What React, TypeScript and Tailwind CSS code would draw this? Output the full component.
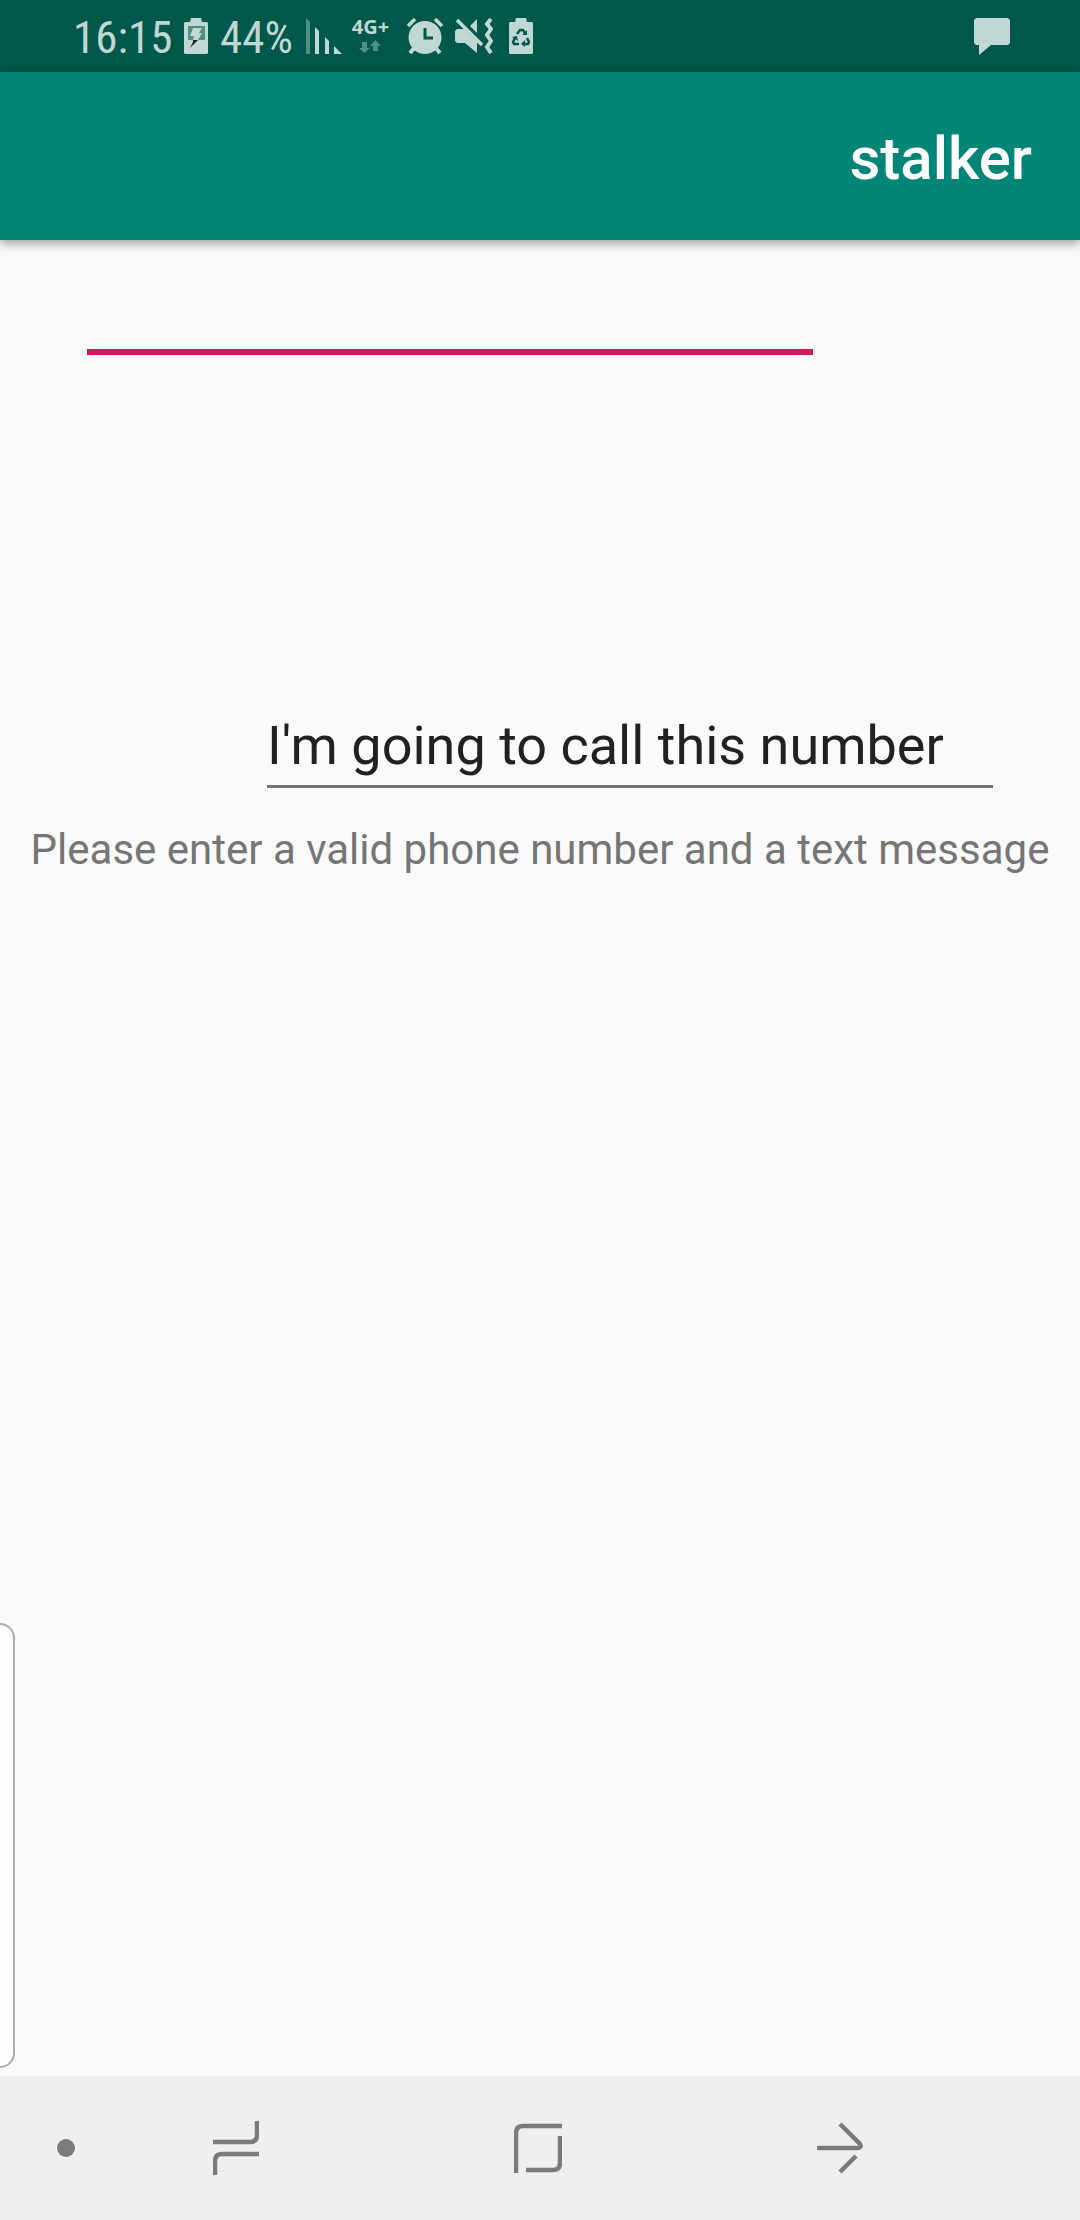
import { useState } from "react";

const tint = "#c1d7d3";
const teal = "#00584a";

function ChargingBatteryIcon() {
  return (
    <svg width="24" height="36" viewBox="0 0 24 36" aria-hidden="true">
      <path d="M7 0h10l1 4h5l1 1v30l-1 1H1l-1-1V5l1-1h5z" fill={tint} />
      <path d="M4 8h17v14H4z" fill="#4f9084" />
      <path d="M9 10h9l-3 5h3l-4 7H9l1-4H6z" fill={tint} />
      <path d="M9 22h5L6 30l3-6z" fill="#17201e" />
    </svg>
  );
}

function SignalIcon() {
  return (
    <svg width="36" height="36" viewBox="0 0 36 36" aria-hidden="true">
      <path d="M0 0l4 4v32H0z" fill="#4f9084" />
      <path d="M9 9l4 4v23H9zM19 19l4 4v13h-4zM28 28l8 8h-8z" fill={tint} />
    </svg>
  );
}

function DataArrowsIcon() {
  return (
    <svg width="23" height="14" viewBox="0 0 23 14" aria-hidden="true">
      <path d="M3 2h5v6h3L5.500 13 0 8h3zM14 11V6h-3l5.500-6L22 6h-3v5z" fill="#4f9084" />
    </svg>
  );
}

function AlarmIcon() {
  return (
    <svg width="36" height="36" viewBox="0 0 36 36" aria-hidden="true">
      <circle cx="18" cy="19.500" r="16.500" fill={tint} />
      <path d="M1 8l7-7M28 1l7 7" stroke={tint} strokeWidth="3.500" />
      <path d="M3 35l5-6M33 35l-5-6" stroke={tint} strokeWidth="4" />
      <path d="M18 10v10h8" stroke={teal} strokeWidth="3" fill="none" />
    </svg>
  );
}

function MutedVibrateIcon() {
  return (
    <svg width="38" height="36" viewBox="0 0 38 36" aria-hidden="true">
      <path d="M15 8l7-7v14zM0 13l2-2h7l13 13v11L10 25H2l-2-2z" fill={tint} />
      <path d="M2 2l25 25" stroke={tint} strokeWidth="3.500" />
      <path d="M36 1l-4 5 4 5-4 6 4 6-4 6 4 6" stroke={tint} strokeWidth="4" fill="none" />
    </svg>
  );
}

function BatterySaverIcon() {
  return (
    <svg width="24" height="36" viewBox="0 0 24 36" aria-hidden="true">
      <path d="M7 0h10l1 4h5l1 1v30l-1 1H1l-1-1V5l1-1h5z" fill={tint} />
      <g fill="none" stroke={teal} strokeWidth="2.500">
        <path d="M8 16l3-4h3l2 3" />
        <path d="M6 20l-2 4 1 2h5" />
        <path d="M18 20l2 4-1 2h-3" />
      </g>
      <path d="M18 12v5h-5zM3 19l5-1 1 5zM16 22v7l-4-3z" fill={teal} />
    </svg>
  );
}

function ChatIcon() {
  return (
    <svg width="36" height="37" viewBox="0 0 36 37" aria-hidden="true">
      <path d="M2 0h32l2 2v23l-2 2H17L5 37V27H2l-2-2V2z" fill={tint} />
    </svg>
  );
}

function StatusBar() {
  return (
    <div className="flex h-[72px] items-center bg-[#00584a] pr-[70px] pl-[73px] text-[45px] leading-[48px] text-[#c1d7d3]">
      <span className="w-[111px] pt-[3px] whitespace-nowrap font-['Roboto_Condensed',Roboto,sans-serif]">16:15</span>
      <ChargingBatteryIcon />
      <span className="ml-3 w-[86px] pt-[3px] whitespace-nowrap font-['Roboto_Condensed',Roboto,sans-serif]">44%</span>
      <SignalIcon />
      <div className="ml-[10px] flex w-[37px] flex-col items-center gap-1">
        <span className="font-['Open_Sans',sans-serif] text-[20px] leading-[18px] font-bold">4G+</span>
        <DataArrowsIcon />
      </div>
      <div className="ml-[18px] flex items-center">
        <AlarmIcon />
        <div className="ml-3 flex items-center gap-4">
          <MutedVibrateIcon />
          <BatterySaverIcon />
        </div>
      </div>
      <div className="ml-auto">
        <ChatIcon />
      </div>
    </div>
  );
}

function NavBar() {
  return (
    <nav className="flex h-36 bg-[#efefef] pr-[89px] text-[#7b7b7b]">
      <button type="button" aria-label="Hide navigation bar" className="flex w-[85px] items-center justify-end pr-[10px]">
        <span className="size-[18px] rounded-full bg-[#7b7b7b]" />
      </button>
      <button type="button" aria-label="Recent apps" className="flex flex-1 items-center justify-center">
        <svg width="46" height="54" viewBox="0 0 46 54" fill="none" stroke="currentColor" strokeWidth="4.500">
          <path d="M0 21h37q7 0 7-7V0M46 33H9q-7 0-7 7v14" />
        </svg>
      </button>
      <button type="button" aria-label="Home" className="flex flex-1 items-center justify-center">
        <svg width="48" height="50" viewBox="0 0 48 50" fill="none" stroke="currentColor" strokeWidth="4.500">
          <path d="M48 3H9Q2 3 2 10v40M12 47h27q7 0 7-7V13" />
        </svg>
      </button>
      <button type="button" aria-label="Back" className="flex flex-1 items-center justify-center">
        <svg width="46" height="52" viewBox="0 0 46 52" fill="none" stroke="currentColor" strokeWidth="4.500">
          <path d="M0 26h41q4-1 2-4L23 2M39 34L23 50" />
        </svg>
      </button>
    </nav>
  );
}

export default function App() {
  const [phone, setPhone] = useState("");
  const [message, setMessage] = useState("I'm going to call this number");

  return (
    <div className="relative flex min-h-screen flex-col bg-[#fafafa] font-['Roboto',sans-serif]">
      <StatusBar />
      <header className="flex h-[168px] items-center justify-end bg-[#008577] px-12 pt-[6px] shadow-[0_3px_10px_rgba(0,0,0,0.4)]">
        <h1 className="text-[60px] leading-[72px] font-medium text-white">stalker</h1>
      </header>
      <main className="flex flex-1 flex-col">
        <div className="flex flex-col px-[87px] pt-5">
          <input
            type="tel"
            aria-label="Phone number"
            value={phone}
            onChange={(e) => setPhone(e.target.value)}
            className="h-[95px] w-[726px] max-w-full border-b-6 border-[#d01c5f] text-[54px] text-[#212121] outline-none"
          />
          <input
            type="text"
            aria-label="Text message"
            value={message}
            onChange={(e) => setMessage(e.target.value)}
            className="mt-[338px] h-[95px] w-[726px] max-w-full self-end border-b-3 border-[#737373] pt-3 text-[54px] text-[#212121] outline-none"
          />
        </div>
        <p className="mt-[37px] text-center text-[42px] leading-[50px] text-[#757575]">
          Please enter a valid phone number and a text message
        </p>
      </main>
      <div className="absolute bottom-[152px] left-0 h-[445px] w-[15px] rounded-r-[20px] border-2 border-l-0 border-[#ababab] bg-[#fefefe]" />
      <NavBar />
    </div>
  );
}
